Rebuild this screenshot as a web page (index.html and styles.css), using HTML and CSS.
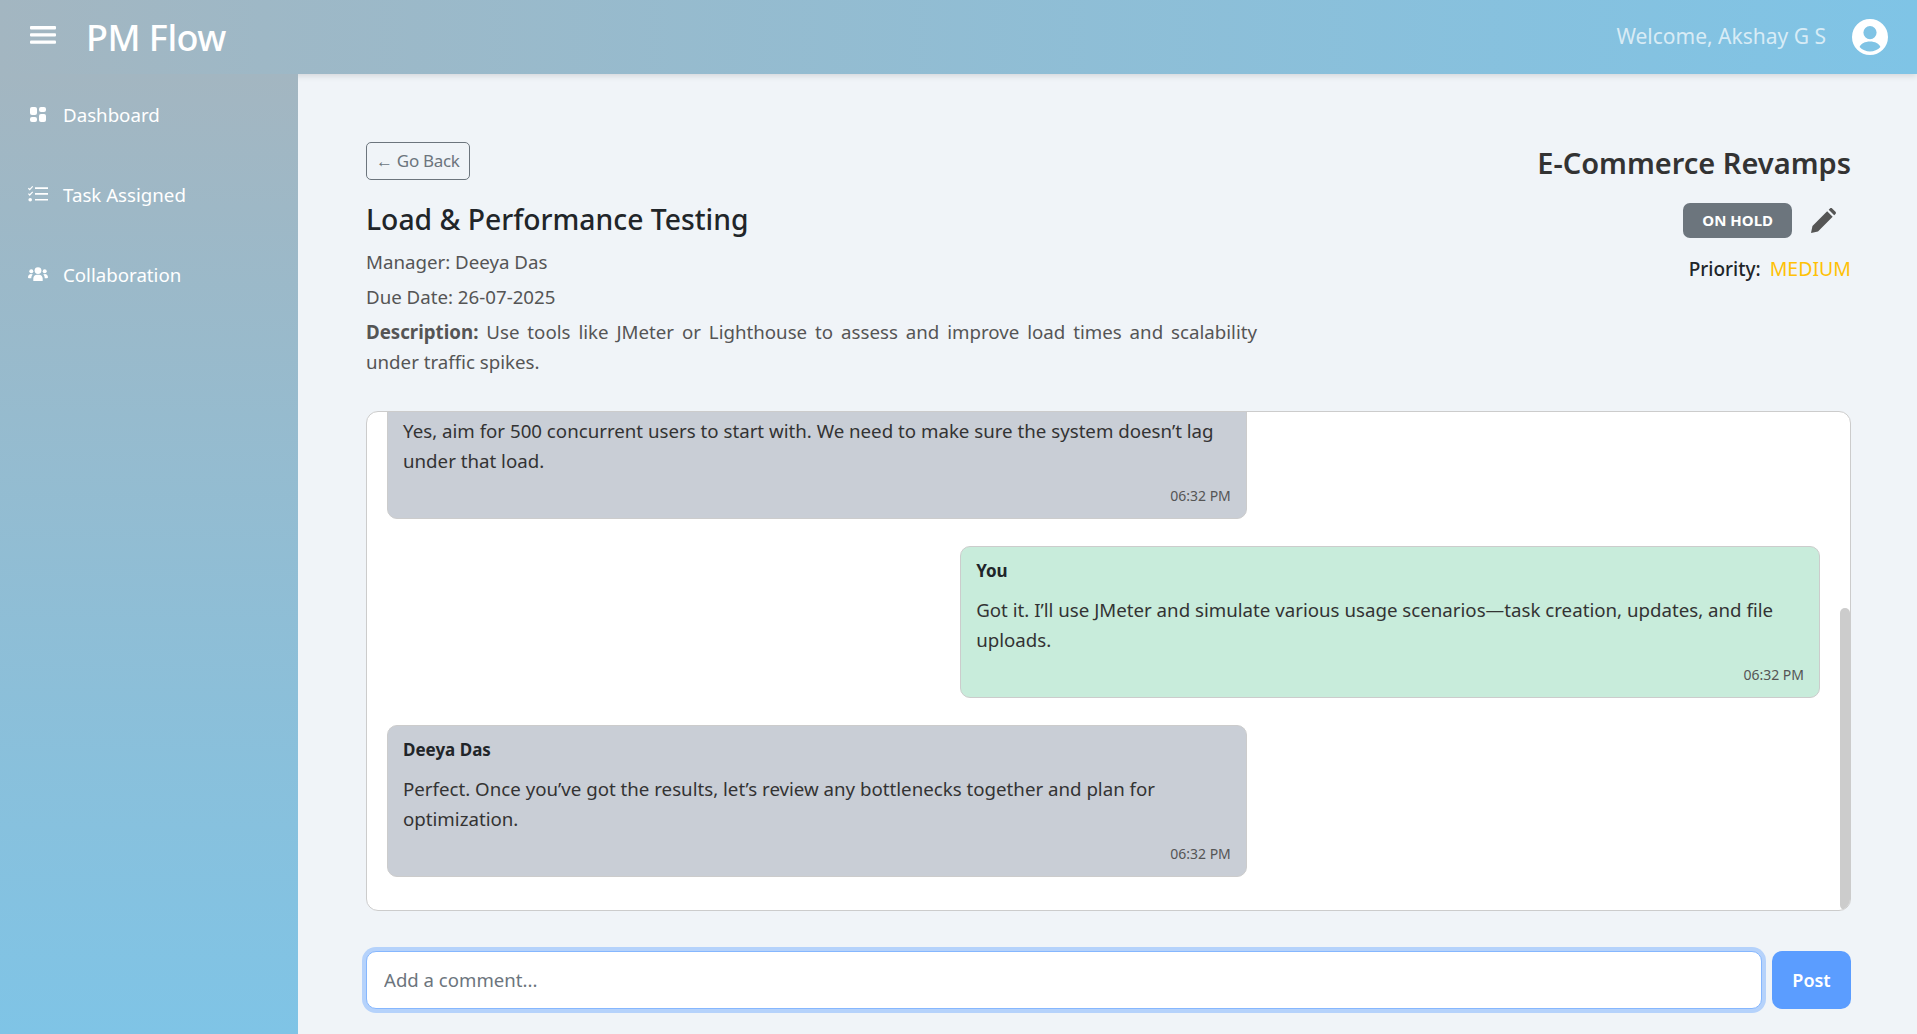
FILE: index.html
```html
<!DOCTYPE html>
<html lang="en">
<head>
	<meta charset="UTF-8">
	<title>PM Flow</title>
	<meta name="viewport" content="width=device-width,initial-scale=1">
	<link rel="stylesheet" href="styles.css">
</head>
<body>
	<header class="topbar">
		<div class="brand">
			<svg class="burger" viewBox="0 0 26 18" width="26" height="18" fill="#fff"><rect width="26" height="3.4" rx="1"/><rect y="7.2" width="26" height="3.4" rx="1"/><rect y="14.4" width="26" height="3.4" rx="1"/></svg>
			<span class="brand-name">PM Flow</span>
		</div>
		<div class="user">
			<span class="welcome">Welcome, Akshay G S</span>
			<svg class="avatar" viewBox="0 0 36 36" width="36" height="36"><path fill="#fff" fill-rule="evenodd" d="M18 0a18 18 0 1 1 0 36a18 18 0 0 1 0-36zM18 7a6.6 6.6 0 1 0 0 13.2a6.6 6.6 0 0 0 0-13.2zM18 22.6c-5 0-9.2 2.200-10.400 5.300a14.200 14.200 0 0 0 20.800 0c-1.200-3.100-5.400-5.300-10.400-5.300z"/></svg>
		</div>
	</header>
	<div class="layout">
		<nav class="sidebar">
			<a class="nav-item" href="#">
				<span class="nav-icon"><svg viewBox="0 0 16 15" width="16" height="15" fill="#fff"><rect width="7" height="8" rx="2"/><rect x="9" width="7" height="5" rx="2"/><rect y="10" width="7" height="5" rx="2"/><rect x="9" y="7" width="7" height="8" rx="2"/></svg></span>
				Dashboard
			</a>
			<a class="nav-item" href="#">
				<span class="nav-icon"><svg viewBox="0 0 20 16" width="20" height="16" fill="#fff"><path d="M7 1.300h13v1.700H7zM7 7.100h13v1.700H7zM7 12.900h13v1.700H7z"/><path d="M.4 2.200l1.300 1.400L4.700.4" fill="none" stroke="#fff" stroke-width="1.200"/><path d="M.4 7.600l1.300 1.400 3-3.200" fill="none" stroke="#fff" stroke-width="1.200"/><circle cx="2.200" cy="13.800" r="1.800"/></svg></span>
				Task Assigned
			</a>
			<a class="nav-item" href="#">
				<span class="nav-icon"><svg viewBox="0 0 20 14" width="20" height="14" fill="#fff"><circle cx="10" cy="3.600" r="3.400"/><circle cx="3.300" cy="4.300" r="2"/><circle cx="16.700" cy="4.300" r="2"/><path d="M5.300 14v-2.500C5.300 9.200 7 7.800 8.800 7.800h2.400c1.800 0 3.500 1.400 3.500 3.700V14zM0 10.500C0 8.300 1.300 7 3 7c.7 0 1.300.2 1.800.6-1 .9-1.500 2.100-1.500 3.700H.9c-.5 0-.9-.3-.9-.8zM20 10.500C20 8.300 18.700 7 17 7c-.7 0-1.300.2-1.800.6 1 .9 1.500 2.100 1.500 3.700h1.900c.5 0 1.400-.3 1.400-.8z"/></svg></span>
				Collaboration
			</a>
		</nav>
		<main class="content">
			<section class="task-head">
				<div class="task-info">
					<button class="back-btn" type="button">← Go Back</button>
					<h1 class="task-title">Load &amp; Performance Testing</h1>
					<p class="meta">Manager: Deeya Das</p>
					<p class="meta">Due Date: 26-07-2025</p>
					<p class="description"><strong>Description:</strong> Use tools like JMeter or Lighthouse to assess and improve load times and scalability under traffic spikes.</p>
				</div>
				<div class="task-side">
					<h2 class="project-name">E-Commerce Revamps</h2>
					<div class="status-row">
						<span class="badge">ON HOLD</span>
						<svg class="edit-icon" viewBox="0 0 24 24" width="25" height="25" fill="#555"><path d="M0 24l1.400-6.700L15.500 3.200l5.300 5.300L6.700 22.600zM17 1.700l1.200-1.200c.6-.6 1.500-.6 2.100 0l3.200 3.200c.6.6.6 1.500 0 2.100L22.300 7z"/></svg>
					</div>
					<p class="priority"><strong>Priority:</strong> <span class="priority-medium">MEDIUM</span></p>
				</div>
			</section>
			<section class="chat-box">
				<article class="bubble bubble-other">
					<p class="bubble-text">Yes, aim for 500 concurrent users to start with. We need to make sure the system doesn’t lag under that load.</p>
					<time class="bubble-time">06:32 PM</time>
				</article>
				<article class="bubble bubble-own">
					<h3 class="bubble-name">You</h3>
					<p class="bubble-text">Got it. I’ll use JMeter and simulate various usage scenarios—task creation, updates, and file uploads.</p>
					<time class="bubble-time">06:32 PM</time>
				</article>
				<article class="bubble bubble-other">
					<h3 class="bubble-name">Deeya Das</h3>
					<p class="bubble-text">Perfect. Once you’ve got the results, let’s review any bottlenecks together and plan for optimization.</p>
					<time class="bubble-time">06:32 PM</time>
				</article>
				<div class="scroll-thumb"></div>
			</section>
			<form class="comment-form">
				<input class="comment-input" type="text" placeholder="Add a comment...">
				<button class="post-btn" type="button">Post</button>
			</form>
		</main>
	</div>
</body>
</html>
```
FILE: styles.css
```css
*{
	box-sizing:border-box;
}
html,body{
	height:100%;
}
body{
	margin:0;
	overflow:hidden;
	background-color:#f0f4f8;
	color:#212529;
	font-family:"Noto Sans","Open Sans",sans-serif;
	font-size:18.7px;
}
h1,h2,h3,p{
	margin:0;
}
.topbar{
	display:flex;
	align-items:center;
	justify-content:space-between;
	height:74px;
	padding:0 29px 0 30px;
	background:linear-gradient(90deg,#a3b6c1,#7fc4e6);
	box-shadow:0 2px 6px rgba(0,0,0,0.12);
	color:#fff;
}
.brand{
	display:flex;
	align-items:center;
	gap:30px;
}
.burger{
	margin-top:-4px;
}
.brand-name{
	font-size:36px;
	font-weight:500;
	letter-spacing:-0.5px;
}
.user{
	display:flex;
	align-items:center;
	gap:26px;
}
.welcome{
	margin-top:-3px;
	font-size:21px;
	color:rgba(255,255,255,0.7);
}
.layout{
	display:flex;
	height:960px;
}
.sidebar{
	display:flex;
	flex-direction:column;
	flex:none;
	width:298px;
	padding-left:28px;
	background:linear-gradient(180deg,#a3b6c1,#7fc4e6);
}
.nav-item{
	display:flex;
	align-items:center;
	gap:15px;
	height:80px;
	color:#fff;
	font-size:18.7px;
	text-decoration:none;
}
.nav-icon{
	display:flex;
	align-items:center;
	justify-content:center;
	flex:none;
	width:20px;
}
.content{
	flex:1;
	min-width:0;
	padding:68px 66px 0 68px;
}
.task-head{
	display:flex;
	justify-content:space-between;
	height:269px;
}
.task-info{
	width:60%;
}
.back-btn{
	display:block;
	height:38px;
	padding:0 9px 2px;
	border:1px solid #6c757d;
	border-radius:5px;
	background:transparent;
	color:#6c757d;
	font-family:inherit;
	font-size:17px;
	letter-spacing:-0.3px;
}
.task-title{
	margin:19px 0 9px;
	font-size:28.3px;
	font-weight:500;
	line-height:40px;
}
.meta{
	margin-top:7px;
	color:#555;
	line-height:28px;
}
.description{
	margin-top:6px;
	color:#555;
	line-height:30px;
	text-align:justify;
}
.task-side{
	display:flex;
	flex-direction:column;
	align-items:flex-end;
}
.project-name{
	color:#333;
	font-size:29px;
	font-weight:600;
	line-height:42px;
}
.status-row{
	display:flex;
	align-items:center;
	gap:19px;
	margin-top:19px;
	margin-right:15px;
}
.badge{
	display:flex;
	align-items:center;
	height:35px;
	padding:0 19px 2px;
	border-radius:7px;
	background-color:#6c757d;
	color:#fff;
	font-size:15px;
	font-weight:700;
}
.priority{
	margin-top:17px;
	font-size:19px;
}
.priority strong{
	font-weight:500;
	margin-right:4px;
}
.priority-medium{
	color:#ffc107;
	font-size:19.5px;
}
.chat-box{
	display:flex;
	flex-direction:column;
	justify-content:flex-end;
	position:relative;
	height:500px;
	padding:0 30px 6px 20px;
	overflow:hidden;
	border:1px solid #ccc;
	border-radius:12px;
	background-color:#fff;
}
.scroll-thumb{
	position:absolute;
	top:196px;
	right:0;
	bottom:0;
	width:10px;
	border-radius:6px;
	background-color:#ccc;
}
.bubble{
	flex:none;
	width:60%;
	margin-bottom:27px;
	padding:13px 15px 12px;
	border:1px solid #ccc;
	border-radius:10px;
}
.bubble-other{
	align-self:flex-start;
	background-color:#c9ced6;
}
.bubble-own{
	align-self:flex-end;
	background-color:#c8ecdb;
}
.bubble-name{
	font-size:17px;
	font-weight:700;
	line-height:22px;
}
.bubble-text{
	margin-top:13px;
	color:#333;
	line-height:30px;
}
.bubble-time{
	display:block;
	margin-top:10px;
	color:#555;
	font-size:14px;
	line-height:20px;
	text-align:right;
}
.comment-form{
	display:flex;
	gap:10px;
	margin-top:40px;
}
.comment-input{
	flex:1;
	height:58px;
	padding:0 17px 2px;
	border:1px solid #86b7fe;
	border-radius:10px;
	outline:none;
	box-shadow:0 0 0 4px #b5d2fb;
	color:#212529;
	font-family:inherit;
	font-size:18.6px;
}
.comment-input::placeholder{
	color:#6c757d;
}
.post-btn{
	width:79px;
	height:58px;
	border:0;
	border-radius:10px;
	background-color:#5b9dff;
	color:#fff;
	font-family:inherit;
	font-size:18px;
	font-weight:600;
}
```
